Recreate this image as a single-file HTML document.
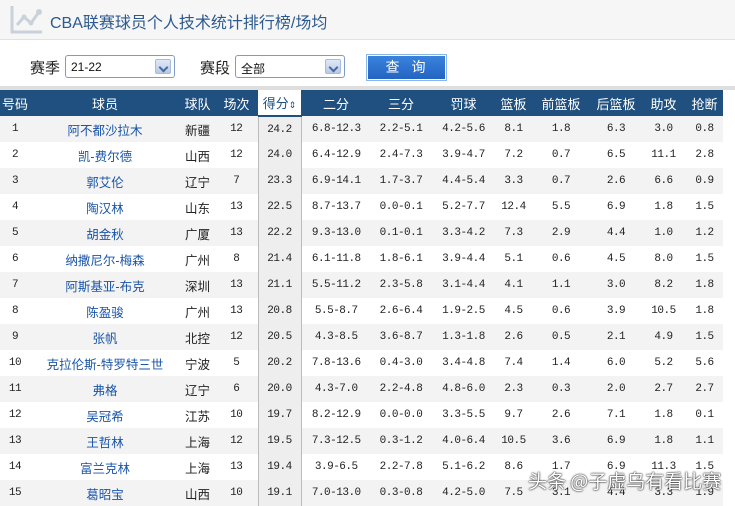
<!DOCTYPE html>
<html><head><meta charset="utf-8"><style>
*{margin:0;padding:0;box-sizing:border-box}
body{width:735px;height:503px;overflow:hidden;background:#fff;font-family:"Liberation Sans","Noto Sans CJK SC",sans-serif;position:relative}
.top{position:absolute;left:0;top:0;width:735px;height:40px;background:#f6f6f6;border-bottom:1px solid #e2e2e2}
.title{position:absolute;left:50px;top:9px;font-size:16px;color:#2d5a8e}
.lbl{position:absolute;top:57px;font-size:15px;color:#222}
.sel{position:absolute;top:55px;height:23px;border:1px solid #7d9cc8;border-radius:3px;background:#fff;font-size:12px;padding:4px 0 0 5px;color:#111}
.sel i{position:absolute;right:3px;top:3px;width:16px;height:15px;background:linear-gradient(#dfe8f7,#b8c9e6);border:1px solid #a8bbdb;border-radius:2px}
.sel i:after{content:"";position:absolute;left:4px;top:4px;width:5px;height:5px;border-right:2px solid #4a6aa0;border-bottom:2px solid #4a6aa0;transform:rotate(45deg)}
.btn{position:absolute;left:366px;top:54px;width:81px;height:27px;border:1px solid #8cb6e6;padding:1px;background:#fff}
.btn div{width:100%;height:100%;background:linear-gradient(#3a83dc,#2364c2);color:#fff;font-size:14px;text-align:center;line-height:22px;letter-spacing:12px;padding-left:10px}
.band{position:absolute;top:86px;left:0;width:735px;height:4px;background:#dedede}
table{position:absolute;left:0;top:90px;border-collapse:collapse;width:723px;table-layout:fixed}
th{background:#1f5080;color:#fff;font-weight:normal;font-size:13px;height:26px;text-align:center}
th.s{background:#fff;color:#1f5080;border-bottom:2px solid #1f5080}
td{height:26px;text-align:center;font-family:"Liberation Mono",monospace;font-size:11px;letter-spacing:-0.5px;color:#222}
tr:nth-child(even) td{background:#f3f3f3}
td.n{color:#1a55a8;font-family:"Liberation Sans","Noto Sans CJK SC",sans-serif;font-size:12.5px;letter-spacing:0}
td.t{font-family:"Liberation Sans","Noto Sans CJK SC",sans-serif;font-size:12.5px;letter-spacing:0}
td.s{background:#eee!important;border-left:1px solid #bbb;border-right:1px solid #bbb}
.wm{position:absolute;left:528px;top:467px;font-size:19px;color:#fff;text-shadow:0 0 2px #222,0 0 1px #000;font-family:"Noto Sans CJK SC",sans-serif}
</style></head><body>
<div class="top">
<svg style="position:absolute;left:10px;top:5px" width="34" height="29" viewBox="0 0 34 29"><path d="M2 1V27H32" stroke="#c9d2db" stroke-width="3" fill="none"/><path d="M7 20L14 12L21 18L29 7" stroke="#c9d2db" stroke-width="3" fill="none"/><circle cx="14" cy="12" r="2.5" fill="#c9d2db"/><circle cx="21" cy="18" r="2.5" fill="#c9d2db"/><circle cx="29" cy="7" r="3" fill="#c9d2db"/></svg>
<div class="title">CBA联赛球员个人技术统计排行榜/场均</div></div>
<div class="lbl" style="left:30px">赛季</div>
<div class="sel" style="left:65px;width:110px">21-22<i></i></div>
<div class="lbl" style="left:200px">赛段</div>
<div class="sel" style="left:235px;width:110px">全部<i></i></div>
<div class="btn"><div>查询</div></div>
<div class="band"></div>
<table>
<colgroup><col style="width:30px"><col style="width:150px"><col style="width:35px"><col style="width:43px"><col style="width:43px"><col style="width:70px"><col style="width:60px"><col style="width:65px"><col style="width:35px"><col style="width:60px"><col style="width:50px"><col style="width:45px"><col style="width:37px"></colgroup>
<tr><th>号码</th><th>球员</th><th>球队</th><th>场次</th><th class="s">得分<span style="font-size:9px">⇕</span></th><th>二分</th><th>三分</th><th>罚球</th><th>篮板</th><th>前篮板</th><th>后篮板</th><th>助攻</th><th>抢断</th></tr>
<tr><td>1</td><td class="n">阿不都沙拉木</td><td class="t">新疆</td><td>12</td><td class="s">24.2</td><td>6.8-12.3</td><td>2.2-5.1</td><td>4.2-5.6</td><td>8.1</td><td>1.8</td><td>6.3</td><td>3.0</td><td>0.8</td></tr>
<tr><td>2</td><td class="n">凯-费尔德</td><td class="t">山西</td><td>12</td><td class="s">24.0</td><td>6.4-12.9</td><td>2.4-7.3</td><td>3.9-4.7</td><td>7.2</td><td>0.7</td><td>6.5</td><td>11.1</td><td>2.8</td></tr>
<tr><td>3</td><td class="n">郭艾伦</td><td class="t">辽宁</td><td>7</td><td class="s">23.3</td><td>6.9-14.1</td><td>1.7-3.7</td><td>4.4-5.4</td><td>3.3</td><td>0.7</td><td>2.6</td><td>6.6</td><td>0.9</td></tr>
<tr><td>4</td><td class="n">陶汉林</td><td class="t">山东</td><td>13</td><td class="s">22.5</td><td>8.7-13.7</td><td>0.0-0.1</td><td>5.2-7.7</td><td>12.4</td><td>5.5</td><td>6.9</td><td>1.8</td><td>1.5</td></tr>
<tr><td>5</td><td class="n">胡金秋</td><td class="t">广厦</td><td>13</td><td class="s">22.2</td><td>9.3-13.0</td><td>0.1-0.1</td><td>3.3-4.2</td><td>7.3</td><td>2.9</td><td>4.4</td><td>1.0</td><td>1.2</td></tr>
<tr><td>6</td><td class="n">纳撒尼尔-梅森</td><td class="t">广州</td><td>8</td><td class="s">21.4</td><td>6.1-11.8</td><td>1.8-6.1</td><td>3.9-4.4</td><td>5.1</td><td>0.6</td><td>4.5</td><td>8.0</td><td>1.5</td></tr>
<tr><td>7</td><td class="n">阿斯基亚-布克</td><td class="t">深圳</td><td>13</td><td class="s">21.1</td><td>5.5-11.2</td><td>2.3-5.8</td><td>3.1-4.4</td><td>4.1</td><td>1.1</td><td>3.0</td><td>8.2</td><td>1.8</td></tr>
<tr><td>8</td><td class="n">陈盈骏</td><td class="t">广州</td><td>13</td><td class="s">20.8</td><td>5.5-8.7</td><td>2.6-6.4</td><td>1.9-2.5</td><td>4.5</td><td>0.6</td><td>3.9</td><td>10.5</td><td>1.8</td></tr>
<tr><td>9</td><td class="n">张帆</td><td class="t">北控</td><td>12</td><td class="s">20.5</td><td>4.3-8.5</td><td>3.6-8.7</td><td>1.3-1.8</td><td>2.6</td><td>0.5</td><td>2.1</td><td>4.9</td><td>1.5</td></tr>
<tr><td>10</td><td class="n">克拉伦斯-特罗特三世</td><td class="t">宁波</td><td>5</td><td class="s">20.2</td><td>7.8-13.6</td><td>0.4-3.0</td><td>3.4-4.8</td><td>7.4</td><td>1.4</td><td>6.0</td><td>5.2</td><td>5.6</td></tr>
<tr><td>11</td><td class="n">弗格</td><td class="t">辽宁</td><td>6</td><td class="s">20.0</td><td>4.3-7.0</td><td>2.2-4.8</td><td>4.8-6.0</td><td>2.3</td><td>0.3</td><td>2.0</td><td>2.7</td><td>2.7</td></tr>
<tr><td>12</td><td class="n">吴冠希</td><td class="t">江苏</td><td>10</td><td class="s">19.7</td><td>8.2-12.9</td><td>0.0-0.0</td><td>3.3-5.5</td><td>9.7</td><td>2.6</td><td>7.1</td><td>1.8</td><td>0.1</td></tr>
<tr><td>13</td><td class="n">王哲林</td><td class="t">上海</td><td>12</td><td class="s">19.5</td><td>7.3-12.5</td><td>0.3-1.2</td><td>4.0-6.4</td><td>10.5</td><td>3.6</td><td>6.9</td><td>1.8</td><td>1.1</td></tr>
<tr><td>14</td><td class="n">富兰克林</td><td class="t">上海</td><td>13</td><td class="s">19.4</td><td>3.9-6.5</td><td>2.2-7.8</td><td>5.1-6.2</td><td>8.6</td><td>1.7</td><td>6.9</td><td>11.3</td><td>1.5</td></tr>
<tr><td>15</td><td class="n">葛昭宝</td><td class="t">山西</td><td>10</td><td class="s">19.1</td><td>7.0-13.0</td><td>0.3-0.8</td><td>4.2-5.0</td><td>7.5</td><td>3.1</td><td>4.4</td><td>3.3</td><td>1.9</td></tr>
</table>
<div class="wm">头条 @子虚乌有看比赛</div>
</body></html>
